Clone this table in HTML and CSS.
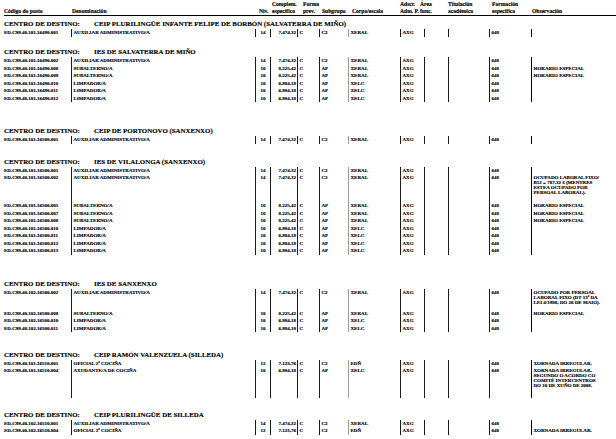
FILE: index.html
```html
<!DOCTYPE html>
<html lang="gl">
<head>
<meta charset="utf-8">
<title>Relación de postos</title>
<link rel="stylesheet" href="styles.css">
</head>
<body>
<div class="page">
  <div class="head">
    <div><div>&nbsp;</div><div>Código do posto</div></div>
    <div><div>&nbsp;</div><div>Denominación</div></div>
    <div><div>&nbsp;</div><div>Niv.</div></div>
    <div><div>Complem.</div><div>específico</div></div>
    <div><div>Forma</div><div>prev.</div></div>
    <div><div>&nbsp;</div><div>Subgrupo</div></div>
    <div><div>&nbsp;</div><div>Corpo/escala</div></div>
    <div><div>Adscr.</div><div>Adm. P.</div></div>
    <div><div>Área</div><div>func.</div></div>
    <div><div>Titulación</div><div>académica</div></div>
    <div><div>Formación</div><div>específica</div></div>
    <div><div>&nbsp;</div><div>Observación</div></div>
  </div>

  <section class="sec s1">
    <div class="title"><span class="lbl">CENTRO DE DESTINO:</span><span>CEIP PLURILINGÜE INFANTE FELIPE DE BORBÓN (SALVATERRA DE MIÑO)</span></div>
    <div class="row"><span class="code">ED.C99.40.101.16490.001</span><span>AUXILIAR ADMINISTRATIVO/A</span><span class="niv">14</span><span class="cmp">7.474,32</span><span>C</span><span>C2</span><span class="ce">XERAL</span><span>AXG</span><span></span><span></span><span>648</span><span class="ob"></span></div>
  </section>

  <section class="sec s2">
    <div class="title"><span class="lbl">CENTRO DE DESTINO:</span><span>IES DE SALVATERRA DE MIÑO</span></div>
    <div class="row"><span class="code">ED.C99.40.101.16490.002</span><span>AUXILIAR ADMINISTRATIVO/A</span><span class="niv">14</span><span class="cmp">7.474,32</span><span>C</span><span>C2</span><span class="ce">XERAL</span><span>AXG</span><span></span><span></span><span>648</span><span class="ob"></span></div>
    <div class="row"><span class="code">ED.C99.40.101.16490.008</span><span>SUBALTERNO/A</span><span class="niv">10</span><span class="cmp">8.225,42</span><span>C</span><span>AP</span><span class="ce">XERAL</span><span>AXG</span><span></span><span></span><span>648</span><span class="ob">HORARIO ESPECIAL</span></div>
    <div class="row"><span class="code">ED.C99.40.101.16490.009</span><span>SUBALTERNO/A</span><span class="niv">10</span><span class="cmp">8.225,42</span><span>C</span><span>AP</span><span class="ce">XERAL</span><span>AXG</span><span></span><span></span><span>648</span><span class="ob">HORARIO ESPECIAL</span></div>
    <div class="row"><span class="code">ED.C99.40.101.16490.010</span><span>LIMPADOR/A</span><span class="niv">10</span><span class="cmp">6.984,18</span><span>C</span><span>AP</span><span class="ce">XELC</span><span>AXG</span><span></span><span></span><span>648</span><span class="ob"></span></div>
    <div class="row"><span class="code">ED.C99.40.101.16490.011</span><span>LIMPADOR/A</span><span class="niv">10</span><span class="cmp">6.984,18</span><span>C</span><span>AP</span><span class="ce">XELC</span><span>AXG</span><span></span><span></span><span>648</span><span class="ob"></span></div>
    <div class="row"><span class="code">ED.C99.40.101.16490.012</span><span>LIMPADOR/A</span><span class="niv">10</span><span class="cmp">6.984,18</span><span>C</span><span>AP</span><span class="ce">XELC</span><span>AXG</span><span></span><span></span><span>648</span><span class="ob"></span></div>
  </section>

  <section class="sec s3">
    <div class="title"><span class="lbl">CENTRO DE DESTINO:</span><span>CEIP DE PORTONOVO (SANXENXO)</span></div>
    <div class="row"><span class="code">ED.C99.40.101.16500.001</span><span>AUXILIAR ADMINISTRATIVO/A</span><span class="niv">14</span><span class="cmp">7.474,32</span><span>C</span><span>C2</span><span class="ce">XERAL</span><span>AXG</span><span></span><span></span><span>648</span><span class="ob"></span></div>
  </section>

  <section class="sec s4">
    <div class="title"><span class="lbl">CENTRO DE DESTINO:</span><span>IES DE VILALONGA (SANXENXO)</span></div>
    <div class="row"><span class="code">ED.C99.40.101.16500.001</span><span>AUXILIAR ADMINISTRATIVO/A</span><span class="niv">14</span><span class="cmp">7.474,32</span><span>C</span><span>C2</span><span class="ce">XERAL</span><span>AXG</span><span></span><span></span><span>648</span><span class="ob"></span></div>
    <div class="row"><span class="code">ED.C99.40.101.16500.002</span><span>AUXILIAR ADMINISTRATIVO/A</span><span class="niv">14</span><span class="cmp">7.474,32</span><span>C</span><span>C2</span><span class="ce">XERAL</span><span>AXG</span><span></span><span></span><span>648</span><span class="ob l4">OCUPADO LABORAL FIXO/<br>B12 = 787,32 € (MENTRES<br>ESTEA OCUPADO POR<br>PERSOAL LABORAL).</span></div>
    <div class="row"><span class="code">ED.C99.40.101.16500.005</span><span>SUBALTERNO/A</span><span class="niv">10</span><span class="cmp">8.225,42</span><span>C</span><span>AP</span><span class="ce">XERAL</span><span>AXG</span><span></span><span></span><span>648</span><span class="ob">HORARIO ESPECIAL</span></div>
    <div class="row"><span class="code">ED.C99.40.101.16500.007</span><span>SUBALTERNO/A</span><span class="niv">10</span><span class="cmp">8.225,42</span><span>C</span><span>AP</span><span class="ce">XERAL</span><span>AXG</span><span></span><span></span><span>648</span><span class="ob">HORARIO ESPECIAL</span></div>
    <div class="row"><span class="code">ED.C99.40.101.16500.008</span><span>SUBALTERNO/A</span><span class="niv">10</span><span class="cmp">8.225,42</span><span>C</span><span>AP</span><span class="ce">XERAL</span><span>AXG</span><span></span><span></span><span>648</span><span class="ob">HORARIO ESPECIAL</span></div>
    <div class="row"><span class="code">ED.C99.40.101.16500.010</span><span>LIMPADOR/A</span><span class="niv">10</span><span class="cmp">6.984,18</span><span>C</span><span>AP</span><span class="ce">XELC</span><span>AXG</span><span></span><span></span><span>648</span><span class="ob"></span></div>
    <div class="row"><span class="code">ED.C99.40.101.16500.011</span><span>LIMPADOR/A</span><span class="niv">10</span><span class="cmp">6.984,18</span><span>C</span><span>AP</span><span class="ce">XELC</span><span>AXG</span><span></span><span></span><span>648</span><span class="ob"></span></div>
    <div class="row"><span class="code">ED.C99.40.101.16500.012</span><span>LIMPADOR/A</span><span class="niv">10</span><span class="cmp">6.984,18</span><span>C</span><span>AP</span><span class="ce">XELC</span><span>AXG</span><span></span><span></span><span>648</span><span class="ob"></span></div>
    <div class="row"><span class="code">ED.C99.40.101.16500.013</span><span>LIMPADOR/A</span><span class="niv">10</span><span class="cmp">6.984,18</span><span>C</span><span>AP</span><span class="ce">XELC</span><span>AXG</span><span></span><span></span><span>648</span><span class="ob"></span></div>
  </section>

  <section class="sec s5">
    <div class="title"><span class="lbl">CENTRO DE DESTINO:</span><span>IES DE SANXENXO</span></div>
    <div class="row"><span class="code">ED.C99.40.102.16500.002</span><span>AUXILIAR ADMINISTRATIVO/A</span><span class="niv">14</span><span class="cmp">7.474,32</span><span>C</span><span>C2</span><span class="ce">XERAL</span><span>AXG</span><span></span><span></span><span>648</span><span class="ob l3">OCUPADO POR PERSOAL<br>LABORAL FIXO (DT 13ª DA<br>LEI 4/1988, DO 26 DE MAIO).</span></div>
    <div class="row"><span class="code">ED.C99.40.102.16500.008</span><span>SUBALTERNO/A</span><span class="niv">10</span><span class="cmp">8.225,42</span><span>C</span><span>AP</span><span class="ce">XERAL</span><span>AXG</span><span></span><span></span><span>648</span><span class="ob">HORARIO ESPECIAL</span></div>
    <div class="row"><span class="code">ED.C99.40.102.16500.010</span><span>LIMPADOR/A</span><span class="niv">10</span><span class="cmp">6.984,18</span><span>C</span><span>AP</span><span class="ce">XELC</span><span>AXG</span><span></span><span></span><span>648</span><span class="ob"></span></div>
    <div class="row"><span class="code">ED.C99.40.102.16500.011</span><span>LIMPADOR/A</span><span class="niv">10</span><span class="cmp">6.984,18</span><span>C</span><span>AP</span><span class="ce">XELC</span><span>AXG</span><span></span><span></span><span>648</span><span class="ob"></span></div>
  </section>

  <section class="sec s6">
    <div class="title"><span class="lbl">CENTRO DE DESTINO:</span><span>CEIP RAMÓN VALENZUELA (SILLEDA)</span></div>
    <div class="row"><span class="code">ED.C99.40.101.16510.001</span><span>OFICIAL 2ª COCIÑA</span><span class="niv">12</span><span class="cmp">7.123,76</span><span>C</span><span>C2</span><span class="ce">EDÑ</span><span>AXG</span><span></span><span></span><span>648</span><span class="ob">XORNADA IRREGULAR.</span></div>
    <div class="row"><span class="code">ED.C99.40.101.16510.004</span><span>AXUDANTE/A DE COCIÑA</span><span class="niv">10</span><span class="cmp">6.984,18</span><span>C</span><span>AP</span><span class="ce">XELC</span><span>AXG</span><span></span><span></span><span>648</span><span class="ob l4 tall">XORNADA IRREGULAR,<br>SEGUNDO O ACORDO CO<br>COMITÉ INTERCENTROS<br>DO 10 DE XUÑO DE 2008.</span></div>
  </section>

  <section class="sec s7">
    <div class="title"><span class="lbl">CENTRO DE DESTINO:</span><span>CEIP PLURILINGÜE DE SILLEDA</span></div>
    <div class="row"><span class="code">ED.C99.40.102.16510.001</span><span>AUXILIAR ADMINISTRATIVO/A</span><span class="niv">14</span><span class="cmp">7.474,32</span><span>C</span><span>C2</span><span class="ce">XERAL</span><span>AXG</span><span></span><span></span><span>648</span><span class="ob"></span></div>
    <div class="row"><span class="code">ED.C99.40.102.16510.004</span><span>OFICIAL 2ª COCIÑA</span><span class="niv">12</span><span class="cmp">7.123,76</span><span>C</span><span>C2</span><span class="ce">EDÑ</span><span>AXG</span><span></span><span></span><span>648</span><span class="ob">XORNADA IRREGULAR.</span></div>
  </section>
</div>
</body>
</html>
```

FILE: styles.css
```css
html, body {
  margin: 0;
  padding: 0;
  background: #ffffff;
}

body {
  width: 616px;
  height: 439px;
  overflow: hidden;
  color: #000000;
  font-family: "Liberation Serif", "Times New Roman", serif;
  font-weight: bold;
  -webkit-text-stroke: 0.15px #000000;
}

.page {
  padding-left: 4px;
}

/* header */
.head {
  display: grid;
  grid-template-columns: 68px 187px 13px 31px 19px 30px 48px 20px 28px 44px 40px 1fr;
  font-size: 5.6px;
  line-height: 7px;
  padding-top: 1px;
  border-bottom: 1px solid #000000;
  white-space: nowrap;
}

/* section title */
.title {
  display: flex;
  height: 10px;
  line-height: 10px;
  font-size: 6.9px;
  white-space: nowrap;
}

.title .lbl {
  width: 90px;
  flex: none;
}

.s1 { margin-top: 3px; }
.s2 { margin-top: 10.5px; }
.s3 { margin-top: 24px; }
.s4 { margin-top: 13px; }
.s5 { margin-top: 24px; }
.s6 { margin-top: 17.5px; }
.s7 { margin-top: 12px; }

/* data rows */
.row {
  display: grid;
  grid-template-columns: 67px 184px 15px 27px 22px 29px 52px 24px 24px 41px 42px 1fr;
  font-size: 5px;
  line-height: 7.5px;
}

.row > span {
  border-left: 1px solid #1a1a1a;
  padding-left: 1.5px;
  white-space: nowrap;
  overflow: hidden;
}

.row > .code {
  border-left: 0;
  padding-left: 0;
}

.row > .niv {
  text-align: center;
  padding-left: 0;
}

.row > .cmp {
  text-align: right;
  padding-left: 0;
  padding-right: 1px;
}

.row > .ce {
  border-left: 1.5px solid #9a9a9a;
}

.row > .ob {
  border-left: 1px solid #000000;
  line-height: 5px;
  padding-top: 1.25px;
  white-space: nowrap;
}

.row > .l3 { padding-bottom: 4.75px; }
.row > .l4 { padding-bottom: 6.75px; }
.row > .tall { padding-bottom: 9.25px; }
```
